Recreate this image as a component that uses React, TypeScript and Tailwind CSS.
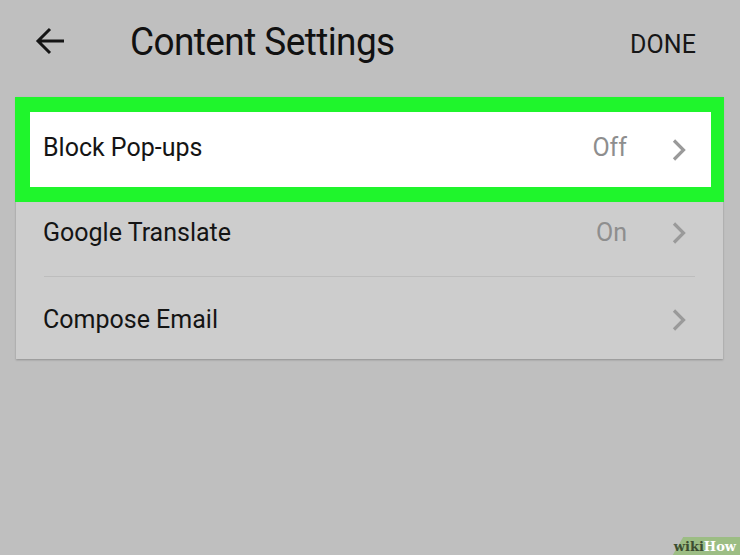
import React from "react";

function Chevron() {
  return (
    <svg width="16" height="24" viewBox="0 0 16 24" className="shrink-0">
      <path d="M3 2.5 L12.5 12 L3 21.5" fill="none" stroke="#9a9a9a" strokeWidth="3.2" strokeLinecap="butt" strokeLinejoin="miter" />
    </svg>
  );
}

export default function App() {
  return (
    <div
      className="relative w-[740px] h-[555px] overflow-hidden bg-[#bfbfbf]"
      style={{ fontFamily: "Roboto, 'Noto Sans', sans-serif" }}
    >
      {/* Header */}
      <div className="flex items-center h-[82px]">
        <div className="w-[130px] pl-[35px] flex items-center">
          <svg width="31" height="30" viewBox="0 0 31 30">
            <path d="M29 15 H4 M15 3 L3 15 L15 27" fill="none" stroke="#151515" strokeWidth="3" />
          </svg>
        </div>
        <div className="flex-1 text-[37px] leading-none text-[#111111] tracking-[-0.6px] scale-y-[1.06]">Content Settings</div>
        <div className="pr-[44px] mt-[7px] text-[25px] text-[#161616] tracking-[0.1px] scale-y-[1.05]">DONE</div>
      </div>

      {/* Card */}
      <div className="mt-[15px] mx-[16px] w-[707px] bg-[#cdcdcd] shadow-[0_1px_2px_rgba(0,0,0,0.25)]">
        <div className="-mx-px h-[105px] border-t-[15px] border-b-[15px] border-l-[15px] border-r-[13px] border-[#1ff52c] bg-white flex items-center pl-[13px] pr-[24px]">
          <div className="flex-1 text-[25px] text-[#141414] -mt-[3px]">Block Pop-ups</div>
          <div className="text-[25px] text-[#8e8e8e] mr-[44px] -mt-[3px]">Off</div>
          <Chevron />
        </div>
        <div className="h-[74px] flex items-center pb-[12px] pl-[27px] pr-[36px]">
          <div className="flex-1 text-[25px] text-[#141414]">Google Translate</div>
          <div className="text-[25px] text-[#8e8e8e] mr-[44px]">On</div>
          <Chevron />
        </div>
        <div className="mx-[28px] h-px bg-[#bdbdbd]" />
        <div className="h-[82px] flex items-center pt-[4px] pl-[27px] pr-[36px]">
          <div className="flex-1 text-[25px] text-[#141414]">Compose Email</div>
          <Chevron />
        </div>
      </div>

      {/* wikiHow watermark */}
      <div className="absolute right-[-8px] bottom-0 h-[18px] w-[70px] bg-[#9cbd84] -skew-x-[30deg]" />
      <div
        className="absolute right-[4px] bottom-[2px] text-[13px] font-bold leading-none"
        style={{ fontFamily: "'DejaVu Serif', serif" }}
      >
        <span className="text-[#3d4d30]">wiki</span>
        <span className="text-white">How</span>
      </div>
    </div>
  );
}
